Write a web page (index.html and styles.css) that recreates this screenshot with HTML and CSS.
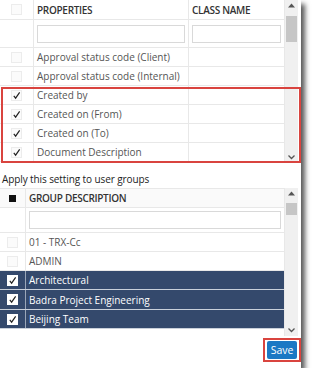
FILE: index.html
```html
<!DOCTYPE html>
<html lang="en">
<head>
	<meta charset="UTF-8">
	<title>Column settings</title>
	<link rel="stylesheet" href="styles.css">
</head>
<body>
	<div class="panel">
		<div class="grid props">
			<div class="grid-body">
				<div class="row head">
					<div class="c-check"><span class="box"></span></div>
					<div class="c-name">PROPERTIES</div>
					<div class="c-class">CLASS NAME</div>
				</div>
				<div class="row filter">
					<div class="c-check"></div>
					<div class="c-name"><span class="input"></span></div>
					<div class="c-class"><span class="input"></span></div>
				</div>
				<div class="row">
					<div class="c-check"><span class="box"></span></div>
					<div class="c-name">Approval status code (Client)</div>
					<div class="c-class"></div>
				</div>
				<div class="row">
					<div class="c-check"><span class="box"></span></div>
					<div class="c-name">Approval status code (Internal)</div>
					<div class="c-class"></div>
				</div>
				<div class="row">
					<div class="c-check"><span class="box"><svg class="tick" viewBox="0 0 10 10"><path d="M2 5.5 L4 8 L8.5 1.5"/></svg></span></div>
					<div class="c-name">Created by</div>
					<div class="c-class"></div>
				</div>
				<div class="row">
					<div class="c-check"><span class="box"><svg class="tick" viewBox="0 0 10 10"><path d="M2 5.5 L4 8 L8.5 1.5"/></svg></span></div>
					<div class="c-name">Created on (From)</div>
					<div class="c-class"></div>
				</div>
				<div class="row">
					<div class="c-check"><span class="box"><svg class="tick" viewBox="0 0 10 10"><path d="M2 5.5 L4 8 L8.5 1.5"/></svg></span></div>
					<div class="c-name">Created on (To)</div>
					<div class="c-class"></div>
				</div>
				<div class="row">
					<div class="c-check"><span class="box"><svg class="tick" viewBox="0 0 10 10"><path d="M2 5.5 L4 8 L8.5 1.5"/></svg></span></div>
					<div class="c-name">Document Description</div>
					<div class="c-class"></div>
				</div>
			</div>
			<div class="scroll">
				<svg class="arrow" viewBox="0 0 13 12"><path d="M3 7.5 L6.5 3.5 L10 7.5 Z"/></svg>
				<div class="thumb top-thumb"></div>
				<div class="track"></div>
				<svg class="arrow down" viewBox="0 0 13 12"><path d="M3.5 4.5 L6.5 7.5 L9.5 4.5"/></svg>
			</div>
			<div class="mark"></div>
		</div>

		<div class="caption">Apply this setting to user groups</div>

		<div class="grid groups">
			<div class="grid-body">
				<div class="row head">
					<div class="c-check"><span class="solid"></span></div>
					<div class="c-name">GROUP DESCRIPTION</div>
				</div>
				<div class="row filter">
					<div class="c-check"></div>
					<div class="c-name"><span class="input"></span></div>
				</div>
				<div class="row">
					<div class="c-check"><span class="box"></span></div>
					<div class="c-name">01 - TRX-Cc</div>
				</div>
				<div class="row">
					<div class="c-check"><span class="box"></span></div>
					<div class="c-name">ADMIN</div>
				</div>
				<div class="row sel">
					<div class="c-check"><span class="box"><svg class="tick" viewBox="0 0 10 10"><path d="M2 5.5 L4 8 L8.5 1.5"/></svg></span></div>
					<div class="c-name">Architectural</div>
				</div>
				<div class="row sel">
					<div class="c-check"><span class="box"><svg class="tick" viewBox="0 0 10 10"><path d="M2 5.5 L4 8 L8.5 1.5"/></svg></span></div>
					<div class="c-name">Badra Project Engineering</div>
				</div>
				<div class="row sel">
					<div class="c-check"><span class="box"><svg class="tick" viewBox="0 0 10 10"><path d="M2 5.5 L4 8 L8.5 1.5"/></svg></span></div>
					<div class="c-name">Beijing Team</div>
				</div>
			</div>
			<div class="scroll">
				<svg class="arrow" viewBox="0 0 13 12"><path d="M3 7.5 L6.5 3.5 L10 7.5 Z"/></svg>
				<div class="thumb group-thumb"></div>
				<div class="track"></div>
				<svg class="arrow down" viewBox="0 0 13 12"><path d="M3.5 4.5 L6.5 7.5 L9.5 4.5"/></svg>
			</div>
		</div>

		<div class="actions">
			<span class="save-mark"><button class="save">Save</button></span>
		</div>
	</div>
</body>
</html>
```

FILE: styles.css
```css
*{margin: 0;padding: 0;box-sizing: border-box;}
body{background: #fff;font-family: "Open Sans", "Liberation Sans", sans-serif;font-size: 10px;color: #555;}

.panel{
	position: relative;
	width: 301px;
	height: 368px;
	background: #fff;
	box-shadow: 4px 4px 5px rgba(0,0,0,0.65);
	display: flex;
	flex-direction: column;
}

.grid{display: flex;position: relative;}
.grid-body{flex: 1;overflow: hidden;}
.props{height: 163px;}
.groups{height: 148px;}

.row{display: flex;height: 19px;border-bottom: 1px solid #e8e8e8;align-items: stretch;}
.row > div{display: flex;align-items: center;}
.c-check{justify-content: center;border-right: 1px solid #e8e8e8;}
.props .c-check{width: 34px;}
.groups .c-check{width: 26px;}
.c-name{flex: 1;padding-left: 3px;white-space: nowrap;}
.props .c-name{border-right: 1px solid #e8e8e8;}
.c-class{width: 95px;padding-left: 3px;}

.head{height: 20px;color: #333;font-weight: 600;font-size: 10px;letter-spacing: -0.3px;}
.groups .head{background: #fafafa;border-top: 1px solid #e8e8e8;}
.props .filter{height: 28px;}
.groups .filter{height: 25px;}
.filter .c-name, .filter .c-class{padding: 0 3px 0 3px;}
.input{display: block;width: 100%;height: 18px;border: 1px solid #d9d9d9;background: #fff;}

.box{width: 11px;height: 11px;border: 1px solid #ececec;background: #fbfbfb;display: flex;align-items: center;justify-content: center;}
.groups .c-check .box{margin-left: -1px;}
.tick{width: 9px;height: 9px;fill: none;stroke: #222;stroke-width: 1.3;}
.solid{width: 7px;height: 7px;background: #111;}

.sel{background: #34496c;color: #fff;border-bottom-color: #c9d0da;}
.sel .c-check{border-right-color: #9aa6b8;}
.sel .box{background: #fff;border-color: #fff;}
.groups .sel:nth-child(6){height: 20px;}

.scroll{width: 14px;margin-right: 3px;background: #f0f0f0;display: flex;flex-direction: column;border-left: 1px solid #e8e8e8;}
.arrow{width: 13px;height: 12px;flex: none;}
.arrow path{fill: #555;}
.arrow.down path{fill: none;stroke: #555;stroke-width: 1.3;}
.thumb{flex: none;margin: 0 1px;background: #c6c6c6;}
.top-thumb{height: 26px;margin-top: 4px;}
.group-thumb{height: 12px;margin-top: 3px;}
.track{flex: 1;}

.mark{position: absolute;left: 1px;top: 87px;width: 300px;height: 76px;border: 2px solid #d9443f;}

.caption{height: 25px;padding: 9px 0 0 2px;color: #222;font-size: 10px;letter-spacing: -0.1px;}

.actions{display: flex;justify-content: flex-end;padding-top: 2px;}
.save-mark{border: 2px solid #d9443f;padding: 1px 2px;display: flex;}
.save{
	width: 30px;height: 18px;
	border: 0;border-radius: 2px;
	background: #1b78c4;color: #fff;
	font-family: "Open Sans", "Liberation Sans", sans-serif;
	font-size: 10.5px;
}
```
